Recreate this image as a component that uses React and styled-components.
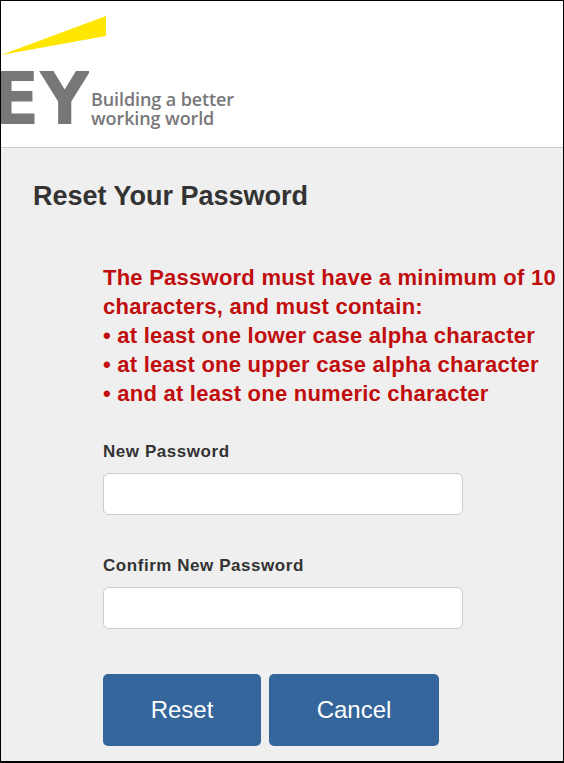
import React from 'react';
import styled, { createGlobalStyle } from 'styled-components';

const GlobalStyle = createGlobalStyle`
  html, body {
    margin: 0;
    padding: 0;
    background: #000;
  }
  body {
    font-family: "Liberation Sans", Arial, sans-serif;
  }
`;

const Frame = styled.div`
  box-sizing: border-box;
  width: 564px;
  height: 763px;
  padding: 1px 1px 2px 1px;
  background: #000;
  display: flex;
  flex-direction: column;
  overflow: hidden;
`;

const Header = styled.header`
  box-sizing: border-box;
  height: 147px;
  flex: none;
  background: #fff;
  border-bottom: 1px solid #ccc;
  padding-top: 14px;
  display: flex;
  flex-direction: column;
`;

const Beam = styled.svg`
  display: block;
  width: 106px;
  height: 42px;
`;

const LogoRow = styled.div`
  display: flex;
  align-items: flex-end;
  margin-top: 14px;
`;

const Mark = styled.svg`
  display: block;
  width: 88px;
  height: 54px;
  flex: none;
`;

const Tagline = styled.div`
  margin: 0 0 -3px 2px;
  font-family: "Open Sans", sans-serif;
  font-size: 18px;
  font-weight: 600;
  line-height: 19px;
  letter-spacing: -0.1px;
  color: #77777a;
`;

const Content = styled.main`
  flex: 1;
  background: #efefef;
  padding: 32px 0 0 32px;
`;

const Title = styled.h1`
  margin: 0;
  font-size: 27px;
  line-height: 32px;
  font-weight: 700;
  color: #333;
`;

const Form = styled.form`
  margin: 51px 0 0 70px;
`;

const Rules = styled.div`
  font-size: 22px;
  line-height: 29px;
  font-weight: 700;
  letter-spacing: 0.24px;
  color: #c00d0d;
  white-space: nowrap;
  margin-bottom: 34px;
`;

const Field = styled.div`
  margin-bottom: 41px;
`;

const Label = styled.label`
  display: block;
  font-size: 17px;
  line-height: 20px;
  font-weight: 700;
  letter-spacing: 0.55px;
  color: #333;
  margin-bottom: 11px;
`;

const Input = styled.input`
  display: block;
  box-sizing: border-box;
  width: 360px;
  height: 42px;
  background: #fff;
  border: 1px solid #ccc;
  border-radius: 6px;
  padding: 6px 12px;
`;

const Actions = styled.div`
  display: flex;
  gap: 8px;
  margin-top: 45px;
`;

const Button = styled.button`
  height: 72px;
  width: ${(p) => p.$width}px;
  background: #34659b;
  border: none;
  border-radius: 5px;
  color: #fff;
  font-family: inherit;
  font-size: 24px;
  padding: 0;
`;

export default function App() {
  return (
    <>
      <GlobalStyle />
      <Frame>
        <Header>
          <Beam viewBox="0 0 106 42">
            <polygon points="0,40 105,1 105,21" fill="#ffe600" />
          </Beam>
          <LogoRow>
            <Mark viewBox="0 0 88 54">
              <text x="-9" y="53" fontFamily="DejaVu Sans" fontWeight="700" fontSize="73" fill="#77777a" textLength="98" lengthAdjust="spacingAndGlyphs">EY</text>
            </Mark>
            <Tagline>Building a better<br />working world</Tagline>
          </LogoRow>
        </Header>
        <Content>
          <Title>Reset Your Password</Title>
          <Form>
            <Rules>
              The Password must have a minimum of 10<br />
              characters, and must contain:<br />
              • at least one lower case alpha character<br />
              • at least one upper case alpha character<br />
              • and at least one numeric character
            </Rules>
            <Field>
              <Label htmlFor="new-password">New Password</Label>
              <Input id="new-password" type="password" />
            </Field>
            <Field>
              <Label htmlFor="confirm-password">Confirm New Password</Label>
              <Input id="confirm-password" type="password" />
            </Field>
            <Actions>
              <Button type="button" $width={158}>Reset</Button>
              <Button type="button" $width={170}>Cancel</Button>
            </Actions>
          </Form>
        </Content>
      </Frame>
    </>
  );
}
